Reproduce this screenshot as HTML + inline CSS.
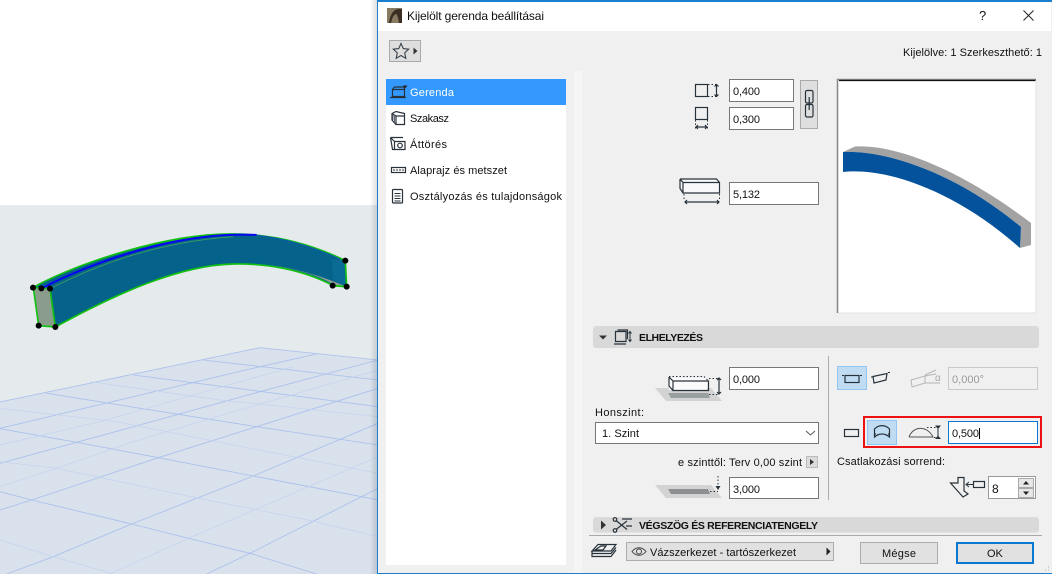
<!DOCTYPE html>
<html><head><meta charset="utf-8"><title>Kijelölt gerenda beállításai</title>
<style>
html,body{margin:0;padding:0;background:#fff;width:1052px;height:574px;overflow:hidden}
svg{display:block}
text{font-family:"Liberation Sans",Arial,sans-serif;font-size:11px;fill:#111}
.b{font-weight:bold;font-size:10.5px}
.i{fill:none;stroke:#28323a;stroke-width:1.2}
.d{fill:none;stroke:#28323a;stroke-width:1;stroke-dasharray:1.5 2}
</style></head><body>
<svg width="1052" height="574" viewBox="0 0 1052 574" xmlns="http://www.w3.org/2000/svg">
<defs><linearGradient id="sh" x1="0" x2="1" y1="0" y2="0"><stop offset="0" stop-color="#000" stop-opacity="0"/><stop offset="1" stop-color="#000" stop-opacity=".13"/></linearGradient></defs>
<!-- 3D view -->
<rect width="378" height="205" fill="#fff"/>
<rect y="205" width="378" height="369" fill="#e5eaed"/>
<g transform="translate(0,200) scale(.33333)">
<polygon points="0,606 780,443 1134,480 1134,1122 0,1122" fill="#d8e1ec"/>
<g fill="none" stroke="#abc1ec" stroke-width="2.6">
<path d="M0,606L780,443L1134,480"/>
<path d="M0,686L230,727L475,773L760,828L1085,890L1134,900"/>
<path d="M0,875L95,900L395,972L565,1015L750,1060L950,1122"/>
<path d="M140,580L535,643L770,680L1134,735"/>
<path d="M400,525L1134,620"/>
<path d="M610,480L1134,540"/>
<path d="M0,930L95,900L475,773L770,680L1134,565"/>
<path d="M20,1122L160,1070L395,972L760,828L1134,670"/>
<path d="M0,790L230,727L535,643L780,575L1134,480"/>
<path d="M620,1122L750,1060L1085,890L1134,865"/>
<path d="M0,685L400,590L780,500L950,462"/>
</g>
<g fill="none" stroke="#c4d2ee" stroke-width="2">
<path d="M0,785L170,805L620,900L925,960L1134,1010"/>
<path d="M0,1020L160,1070L340,1122"/>
<path d="M0,625L350,665L650,725L1134,820"/>
<path d="M270,545L660,600L1134,650"/>
<path d="M0,860L170,805L400,725L650,650L1134,510"/>
<path d="M330,1122L565,1015L925,860L1134,770"/>
<path d="M0,735L300,665L650,565L880,500"/>
</g>
</g>
<g transform="translate(0,200) scale(.33333)">
<polygon points="100,263 150,266 166,381 116,377" fill="#8a9c8c"/>
<path d="M100,262C230,190 500,103 700,103C830,103 940,135 1036,182L1040,260L1000,257C900,205 790,190 700,192C540,195 350,280 166,381L150,266Z" fill="#05628a"/>
<path d="M800,195C880,205 960,225 1000,255L1040,260C980,235 900,205 800,195Z" fill="#8e9e90"/>
<path d="M995,178L1036,182L1040,260L1000,240Z" fill="#0a6c94"/>
<path d="M100,262L116,377L166,381L150,266L100,262M1036,182L1040,260L1000,257" fill="none" stroke="#12c012" stroke-width="5"/>
<path d="M100,262C230,190 500,100 700,102C830,103 940,135 1036,182" fill="none" stroke="#12c012" stroke-width="5"/>
<path d="M166,381C350,280 540,195 700,192C790,190 900,205 1000,257L1040,260" fill="none" stroke="#12c012" stroke-width="5"/>
<path d="M125,265C260,195 480,115 680,105C720,103 750,104 770,105" fill="none" stroke="#0505f0" stroke-width="6"/>
<path d="M150,266C300,190 480,125 700,110" fill="none" stroke="#3fa060" stroke-width="2.500"/>
<path d="M770,106C860,116 950,145 1020,178" fill="none" stroke="#0d5aa8" stroke-width="4"/>
<g fill="#000"><circle cx="99" cy="263" r="9"/><circle cx="124" cy="265" r="9"/><circle cx="150" cy="266" r="9"/><circle cx="116" cy="377" r="9"/><circle cx="166" cy="381" r="9"/><circle cx="1036" cy="182" r="9"/><circle cx="1040" cy="260" r="9"/><circle cx="998" cy="257" r="9"/></g>
</g>
<rect x="370" y="0" width="7" height="574" fill="url(#sh)"/>
<!-- Dialog -->
<rect x="377.500" y=".5" width="675" height="573" fill="#f0f0f0" stroke="#1a7fd0"/>
<rect x="378" y="2" width="673" height="29" fill="#fff"/>
<rect x="377" y="0" width="675" height="2" fill="#1a7fd0"/>
<rect x="387" y="8" width="15" height="15" fill="#8a7a62"/>
<path d="M389,23C390,14 394,9 399,9L402,9L402,23L399,23C398,17 397,14 396,14C393,15 392,19 391,23Z" fill="#3b2f25"/>
<text x="407" y="20" textLength="137" lengthAdjust="spacing" style="font-size:12px">Kijelölt gerenda beállításai</text>
<text x="979" y="20" style="font-size:13px">?</text>
<path d="M1023.500,10.500L1033.500,20.500M1033.500,10.500L1023.500,20.500" stroke="#222" fill="none"/>
<rect x="389.500" y="40.500" width="31" height="21" fill="#dedede" stroke="#aaa"/>
<path d="M401,43.500L403.300,48.600L408.700,49.200L404.700,52.900L405.800,58.300L401,55.500L396.200,58.300L397.300,52.900L393.300,49.200L398.700,48.600Z" fill="none" stroke="#39424a" stroke-width="1.100"/>
<path d="M413.500,47.500L417.500,51L413.500,54.500Z" fill="#333"/>
<text x="903" y="56" textLength="139" lengthAdjust="spacing">Kijelölve: 1 Szerkeszthető: 1</text>
<!-- Left list -->
<rect x="386" y="79" width="180" height="486" fill="#fff"/>
<rect x="386" y="79" width="180" height="26" fill="#3399ff"/>
<rect x="574" y="71" width="8" height="502" fill="#f5f5f5"/>
<path class="i" d="M392.500,89.500L404.500,89.500L404.500,96.500L392.500,96.500ZM392.500,89.500L394.500,87L404,87L404.500,89.500M390,97.500L406,97.500"/>
<path d="M403,85.500L407.500,85.500L405.200,88.500Z" fill="#222"/>
<text x="410" y="96" textLength="44" lengthAdjust="spacing" style="fill:#fff">Gerenda</text>
<path class="i" d="M392,113.500L396,111.500L404.500,113.500L404.500,124.500L396,124.500L392,120ZM396,116L404.500,116M396,116L396,124.500M392,113.500L396,116"/>
<path d="M393,115V120M394.500,116V122" stroke="#667" fill="none"/>
<text x="410" y="122" textLength="39" lengthAdjust="spacing">Szakasz</text>
<path class="i" d="M390.500,137.500L403,137.500M390.500,137.500L392.500,149.500L405,149.500L405,141.500L394.500,141.500L394.500,149.500M390.500,137.500L394.500,141.500"/>
<circle cx="400" cy="145.500" r="2.300" class="i"/>
<text x="410" y="148" textLength="37" lengthAdjust="spacing">Áttörés</text>
<rect x="391.500" y="167.500" width="14" height="5" class="i"/>
<path d="M393,170L404,170" stroke="#28323a" stroke-dasharray="2 1" fill="none"/>
<text x="410" y="174" textLength="97" lengthAdjust="spacing">Alaprajz és metszet</text>
<rect x="392.500" y="189.500" width="10" height="13.500" rx="1" class="i"/>
<path d="M394.500,193.500H400.500M394.500,196H400.500M394.500,198.500H400.500M394.500,201H400.500" stroke="#28323a" fill="none"/>
<text x="410" y="200" textLength="152" lengthAdjust="spacing">Osztályozás és tulajdonságok</text>
<!-- Dimensions -->
<rect x="695.500" y="84.500" width="12" height="12" class="i"/>
<path class="d" d="M708,84.500H716M708,96.500H716"/>
<path d="M716.500,85V96M714.500,86.500L716.500,84.500L718.500,86.500M714.500,94.500L716.500,96.500L718.500,94.500" class="i"/>
<rect x="695.500" y="107.500" width="12" height="12" class="i"/>
<path class="d" d="M695.500,120V129M707.500,120V129"/>
<path d="M696,127H707M698,125L696,127L698,129M705,125L707,127L705,129" class="i"/>
<g fill="#fff" stroke="#777" stroke-width="1">
<rect x="729.500" y="79.500" width="64" height="22"/>
<rect x="729.500" y="107.500" width="64" height="22"/>
<rect x="729.500" y="182.500" width="89" height="22"/>
<rect x="729.500" y="367.500" width="89" height="22"/>
<rect x="595.500" y="422.500" width="223" height="21"/>
<rect x="729.500" y="477.500" width="89" height="21"/>
</g>
<text x="733" y="95" textLength="27" lengthAdjust="spacing">0,400</text>
<text x="733" y="123" textLength="27" lengthAdjust="spacing">0,300</text>
<rect x="800.500" y="80.500" width="17" height="48" fill="#dedede" stroke="#aaa"/>
<rect x="805.500" y="90.500" width="7.500" height="12.500" rx="1.500" class="i"/>
<rect x="805.500" y="104.500" width="7.500" height="12.500" rx="1.500" class="i"/>
<path d="M809.200,97V110" stroke="#28323a" stroke-width="1.200"/>
<path d="M680,178.500H717L720,182V193H684Z" fill="#f8f8fb"/>
<path class="i" d="M680,179L683,182.500H719.500V193H683V182.500M680,179L680,188.500L683,193M680,179H716.500L719.500,182.500"/>
<path class="d" d="M684,194V201M719.500,194V201"/>
<path d="M685,202H719M687,200L685,202L687,204M717,200L719,202L717,204" class="i"/>
<text x="733" y="198" textLength="27" lengthAdjust="spacing">5,132</text>
<!-- Preview -->
<rect x="837" y="79" width="199" height="234" fill="#fff"/>
<path d="M837.500,313V79.500H1036" fill="none" stroke="#858585" stroke-width="1.500"/>
<path d="M839,80.500H1036" stroke="#111" stroke-width="1.200"/>
<path d="M1036,80V313H838" fill="none" stroke="#e2e2e2"/>
<path d="M843,152L855,146.500C905,144 975,180 1031,223L1031,245L1020,248L1021,227C955,172 885,150 843,152Z" fill="#a3a3a3"/>
<path d="M843,152C885,150 955,172 1021,227L1020,248C955,190 885,167 843,172Z" fill="#04529b"/>
<!-- Section ELHELYEZÉS -->
<rect x="593" y="326" width="446" height="22" rx="3" fill="#d9d9d9"/>
<path d="M599,335.500H607L603,339.500Z" fill="#333"/>
<path class="i" d="M615.500,331.500H626V341.500H615.500ZM617.500,330H627.500V339M614,344H626"/>
<path d="M630,332V341M628.500,333.500L630,331.500L631.500,333.500M628.500,339.500L630,341.500L631.500,339.500" fill="none" stroke="#28323a"/>
<text x="639" y="341" class="b" textLength="64" lengthAdjust="spacing">ELHELYEZÉS</text>
<path d="M828.500,356V500" stroke="#aaa"/>
<polygon points="655,388 711,388 722,401 666,401" fill="#d3d3d3"/>
<polygon points="668,393 708,393 710,398 671,398" fill="#999ea0"/>
<path d="M669,378H707V390H669Z" fill="#fbfbfd"/>
<path class="i" d="M669,377L673,381H708.500V390.500H673V381M669,377V386L673,390.500"/>
<path class="d" d="M669,376.500H704L708.500,381M709,378.500H718M709,394.500H718"/>
<path d="M719,378V394M717,380L719,378L721,380M717,392L719,394L721,392" class="i"/>
<text x="733" y="383" textLength="27" lengthAdjust="spacing">0,000</text>
<text x="595" y="416" textLength="49" lengthAdjust="spacing">Honszint:</text>
<text x="602" y="437" textLength="37" lengthAdjust="spacing">1. Szint</text>
<path d="M806,431L810.500,435L815,431" fill="none" stroke="#555"/>
<text x="678" y="466" textLength="124" lengthAdjust="spacing">e szinttől: Terv 0,00 szint</text>
<rect x="806.500" y="456.500" width="11" height="11" fill="#dcdcdc" stroke="#bbb"/>
<path d="M810,459L814,462L810,465Z" fill="#333"/>
<polygon points="655,485 711,485 722,498 666,498" fill="#d3d3d3"/>
<polygon points="668,489 708,489 710,494 671,494" fill="#8c9092"/>
<path class="d" d="M710,491.500H718M718,476V488"/>
<path d="M715.500,486L718,490L720.500,486Z" fill="#28323a"/>
<text x="733" y="493" textLength="27" lengthAdjust="spacing">3,000</text>
<!-- Right column -->
<rect x="837.500" y="366.500" width="29" height="23" fill="#c0dcf3" stroke="#92c7f5"/>
<rect x="845" y="375.500" width="14" height="7" class="i"/>
<path d="M842,375.500H844M860,375.500H862" stroke="#28323a"/>
<path class="i" d="M873,376.500L887,373.500L886,380L874,383Z"/>
<path d="M871,377H872.500M888,372.500H890" stroke="#28323a"/>
<path d="M911,380L925,376V383L912,387ZM925,376L936,374M925,383H940M936,370L925,375" fill="none" stroke="#b5b5b5"/>
<text x="935" y="381" style="font-size:10px;fill:#aaa">α</text>
<rect x="948.500" y="367.500" width="89" height="22" fill="#f0f0f0" stroke="#c9c9c9"/>
<text x="952" y="383" textLength="32" lengthAdjust="spacing" style="fill:#9a9a9a">0,000°</text>
<rect x="844.500" y="429.500" width="14" height="7" class="i"/>
<rect x="864" y="417" width="177" height="30" fill="none" stroke="#ee1111" stroke-width="2"/>
<rect x="867.500" y="420.500" width="29" height="24" fill="#c0dcf3" stroke="#92c7f5"/>
<path class="i" d="M874.500,429C879,424.500 885,424.500 889.500,429V437C885,433 879,433 874.500,437ZM874.500,434H876M888,434H889.500"/>
<path d="M909,437C913,426 927,425 933,437H909" fill="none" stroke="#555"/>
<path class="d" d="M927,427.500H936M934,437.500H936"/>
<path d="M938,427V438" stroke="#28323a"/>
<path d="M935,425.500H941L938,429ZM935,439H941L938,435.500Z" fill="#28323a"/>
<rect x="948.500" y="421.500" width="89" height="22" fill="#fff" stroke="#0a78d0"/>
<text x="952" y="437" textLength="27" lengthAdjust="spacing">0,500</text>
<path d="M979.500,428V439" stroke="#000"/>
<text x="837" y="465" textLength="108" lengthAdjust="spacing">Csatlakozási sorrend:</text>
<path class="i" d="M950.500,483H958V477.500H964V491L968,494L963,497L950.500,483Z" fill="#fff"/>
<path d="M966,484.500H973M969,482L966,484.500L969,487" fill="none" stroke="#28323a"/>
<rect x="973.500" y="481.500" width="11" height="6" class="i"/>
<rect x="988.500" y="476.500" width="47" height="22" fill="#fff" stroke="#999"/>
<rect x="1018.500" y="478.500" width="15" height="9" fill="#e6e6e6" stroke="#aaa"/>
<rect x="1018.500" y="488.500" width="15" height="9" fill="#e6e6e6" stroke="#aaa"/>
<path d="M1023,484.500H1029L1026,481ZM1023,491.500H1029L1026,495Z" fill="#222"/>
<text x="992" y="493" style="font-size:12px">8</text>
<!-- Section 2 -->
<rect x="593" y="517" width="446" height="15.500" rx="3" fill="#d9d9d9"/>
<path d="M601,520.500L606,525L601,529.500Z" fill="#333"/>
<path class="i" d="M616,520.500L627,529.500M616,529.500L627,521M622,519H632M626,526H632"/>
<circle cx="615" cy="519.500" r="1.800" class="i"/>
<circle cx="615" cy="530.500" r="1.800" class="i"/>
<text x="639" y="529" class="b" textLength="179" lengthAdjust="spacing">VÉGSZÖG ÉS REFERENCIATENGELY</text>
<path d="M589,535.500H1042" stroke="#aaa"/>
<!-- Footer -->
<path class="i" d="M592,551L598,544.500H616L611,551ZM592,551V556.500H611L616,550M592,553.500H611L616,547.500M595,550L601,546H606L603,550Z"/>
<rect x="626.500" y="542.500" width="207" height="18" fill="#e1e1e1" stroke="#adadad"/>
<path d="M632,551.500C636,546.500 642,546.500 646,551.500C642,556.500 636,556.500 632,551.500Z" fill="none" stroke="#444"/>
<circle cx="639" cy="551.500" r="2.500" fill="none" stroke="#444"/>
<text x="650" y="556" textLength="146" lengthAdjust="spacing">Vázszerkezet - tartószerkezet</text>
<path d="M826.500,547.500L830.500,551.500L826.500,555.500Z" fill="#222"/>
<rect x="860.500" y="542.500" width="77" height="21" fill="#e1e1e1" stroke="#adadad"/>
<text x="882" y="557" textLength="34" lengthAdjust="spacing">Mégse</text>
<rect x="957" y="543" width="76" height="20" fill="#e1e1e1" stroke="#0a78d0" stroke-width="2"/>
<text x="987" y="557">OK</text>
<path d="M1048,570h1M1045,570h1M1048,567h1" stroke="#b5b5b5"/>
</svg>
</body></html>
